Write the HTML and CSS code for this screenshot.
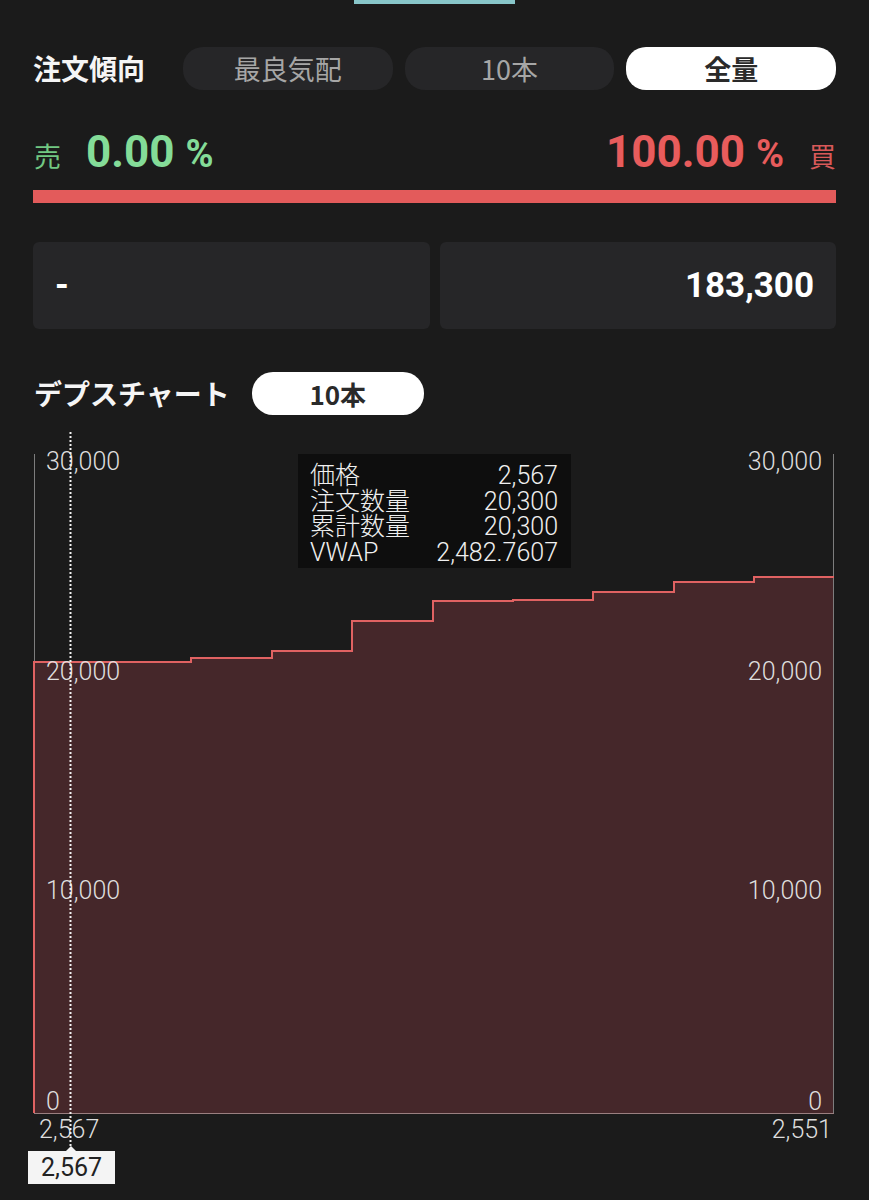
FILE: index.html
```html
<!DOCTYPE html>
<html lang="ja">
<head>
  <meta charset="UTF-8">
  <meta name="viewport" content="width=device-width, initial-scale=1.0">
  <title>注文傾向</title>
  <link rel="stylesheet" href="styles.css">
</head>
<body>

  <div class="indicator"></div>

  <div class="tabs-row">
    <div class="section-title">注文傾向</div>
    <div class="tabs">
      <button class="tab">最良気配</button>
      <button class="tab">10本</button>
      <button class="tab active">全量</button>
    </div>
  </div>

  <div class="ratio-row">
    <div class="side sell">
      <span class="side-label">売</span>
      <span class="pct">0.00</span>
      <span class="pct-unit">%</span>
    </div>
    <div class="side buy">
      <span class="pct">100.00</span>
      <span class="pct-unit">%</span>
      <span class="side-label">買</span>
    </div>
  </div>
  <div class="ratio-bar"></div>

  <div class="totals">
    <div class="total-box left">-</div>
    <div class="total-box right">183,300</div>
  </div>

  <div class="depth-row">
    <div class="section-title">デプスチャート</div>
    <button class="pill">10本</button>
  </div>

  <!-- depth chart: svg uses page coordinates through its viewBox -->
  <div class="chart">
    <svg class="chart-svg" width="869" height="775" viewBox="0 425 869 775">
      <polygon class="area" points="34,1113 34,662 191,662 191,658 272,658 272,651 352,651 352,621 433,621 433,601 513,601 513,600 593,600 593,592 674,592 674,582 754,582 754,577 834,577 834,1113"/>
      <line class="axis" x1="34.5" y1="454" x2="34.5" y2="1113"/>
      <line class="axis" x1="833.5" y1="454" x2="833.5" y2="1113"/>
      <line class="axis base" x1="34" y1="1113.5" x2="834" y2="1113.5"/>
      <polyline class="step" points="34,1113 34,662 191,662 191,658 272,658 272,651 352,651 352,621 433,621 433,601 513,601 513,600 593,600 593,592 674,592 674,582 754,582 754,577 834,577"/>

      <text class="tick" x="46" y="470">30,000</text>
      <text class="tick" x="46" y="680">20,000</text>
      <text class="tick" x="46" y="899">10,000</text>
      <text class="tick" x="46" y="1110">0</text>
      <text class="tick end" x="822" y="470">30,000</text>
      <text class="tick end" x="822" y="680">20,000</text>
      <text class="tick end" x="822" y="899">10,000</text>
      <text class="tick end" x="822" y="1110">0</text>

      <text class="tick" x="39" y="1138">2,567</text>
      <text class="tick end" x="832" y="1138">2,551</text>

      <line class="cursor" x1="70.5" y1="432" x2="70.5" y2="1147"/>
    </svg>

    <div class="info-tip">
      <span>価格</span><span class="val">2,567</span>
      <span>注文数量</span><span class="val">20,300</span>
      <span>累計数量</span><span class="val">20,300</span>
      <span>VWAP</span><span class="val">2,482.7607</span>
    </div>

    <div class="price-tip">2,567</div>
  </div>

</body>
</html>
```

FILE: styles.css
```css
body {
  margin: 0;
  padding: 0;
  background-color: #1b1b1b;
  color: #fff;
  font-family: "Noto Sans CJK JP", Roboto, sans-serif;
  width: 869px;
}

button {
  font-family: inherit;
  border: none;
  cursor: pointer;
}

.indicator {
  width: 161px;
  height: 4px;
  margin-left: 354px;
  background-color: #88c6c9;
}

.tabs-row {
  display: flex;
  align-items: center;
  height: 43px;
  margin: 43px 33px 0 33px;
}

.section-title {
  font-size: 28px;
  font-weight: bold;
  color: #f5f5f5;
  line-height: 43px;
}

.tabs-row .section-title {
  width: 150px;
}

.tabs {
  flex: 1;
  display: flex;
  gap: 12px;
}

.tab {
  flex: 1;
  height: 43px;
  border-radius: 20px;
  background-color: #262628;
  color: #a6a6a6;
  font-size: 27px;
  padding: 0;
}

.tab.active {
  background-color: #fff;
  color: #2a2a2a;
  font-weight: bold;
}

.ratio-row {
  display: flex;
  justify-content: space-between;
  align-items: baseline;
  height: 46px;
  line-height: 46px;
  margin: 39px 33px 0 34px;
}

.side {
  display: flex;
  align-items: baseline;
}

.side-label {
  font-size: 27px;
}

.pct {
  font-family: Roboto, sans-serif;
  font-size: 44px;
  font-weight: bold;
}

.pct-unit {
  font-family: Roboto, sans-serif;
  font-size: 38px;
  font-weight: bold;
  margin-left: 11px;
}

.sell {
  color: #84dc98;
}

.sell .side-label {
  color: #72c882;
  margin-right: 25px;
}

.buy {
  color: #e85c5c;
}

.buy .side-label {
  color: #d85959;
  margin-left: 25px;
}

.ratio-bar {
  height: 13px;
  margin: 15px 33px 0 33px;
  background-color: #e35b5b;
}

.totals {
  display: grid;
  grid-template-columns: 1fr 1fr;
  gap: 10px;
  margin: 39px 33px 0 33px;
}

.total-box {
  height: 87px;
  border-radius: 6px;
  background-color: #262628;
  font-family: Roboto, sans-serif;
  font-size: 35px;
  font-weight: bold;
  line-height: 87px;
  padding: 0 22px;
}

.total-box.right {
  text-align: right;
}

.depth-row {
  display: flex;
  align-items: center;
  height: 43px;
  margin: 43px 33px 0 34px;
}

.pill {
  width: 172px;
  height: 43px;
  margin-left: 22px;
  border-radius: 21px;
  background-color: #fff;
  color: #2a2a2a;
  font-size: 26px;
  font-weight: bold;
  padding: 0;
}

.chart {
  position: relative;
  height: 775px;
  margin-top: 10px;
}

.chart-svg {
  display: block;
}

.area {
  fill: #45272a;
}

.axis {
  stroke: #7d7d7d;
  stroke-width: 1;
}

.axis.base {
  stroke: #9a7f80;
}

.step {
  fill: none;
  stroke: #e06262;
  stroke-width: 2;
}

.tick {
  font-family: Roboto, sans-serif;
  font-size: 25px;
  font-weight: 300;
  fill: #dedede;
}

.tick.end {
  text-anchor: end;
}

.cursor {
  stroke: #f2f2f2;
  stroke-width: 2;
  stroke-dasharray: 2 2;
}

.info-tip {
  position: absolute;
  left: 298px;
  top: 29px;
  width: 248px;
  padding: 9px 13px 2px 12px;
  background-color: #0e0e0e;
  display: grid;
  grid-template-columns: 1fr auto;
  font-family: Roboto, "Noto Sans CJK JP", sans-serif;
  font-size: 25px;
  font-weight: 300;
  line-height: 25.7px;
  color: #f0f0f0;
}

.info-tip .val {
  text-align: right;
}

.price-tip {
  position: absolute;
  left: 28px;
  top: 726px;
  width: 87px;
  height: 33px;
  background-color: #f4f4f4;
  color: #222;
  font-family: Roboto, sans-serif;
  font-size: 25px;
  line-height: 33px;
  text-align: center;
}

.price-tip::before {
  content: "";
  position: absolute;
  left: 38px;
  top: -5px;
  border-left: 5px solid transparent;
  border-right: 5px solid transparent;
  border-bottom: 5px solid #f4f4f4;
}
```
